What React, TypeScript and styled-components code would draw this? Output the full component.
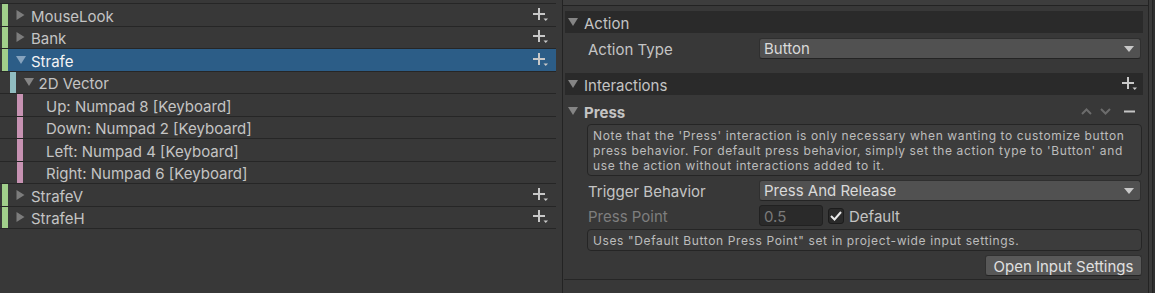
import React from "react";
import styled, { createGlobalStyle } from "styled-components";

const GlobalStyle = createGlobalStyle`
  html, body { margin: 0; padding: 0; background: #383838; }
  body { font-family: Inter, "Noto Sans", "Liberation Sans", sans-serif; color: #c4c4c4; }
  * { box-sizing: border-box; }
`;

const Page = styled.div`
  display: flex;
  width: 1155px;
  height: 293px;
  overflow: hidden;
  background: #383838;
`;

/* ---------- left tree ---------- */
const LeftPanel = styled.div`
  width: 563px;
  flex-shrink: 0;
  border-right: 1px solid #232323;
  padding-right: 6px;
  display: flex;
  flex-direction: column;
`;

const TopEdge = styled.div`
  height: 4px;
  border-bottom: 1px solid #262626;
`;

const Row = styled.div<{ $level: number }>`
  display: flex;
  height: 22.5px;
  border-bottom: 1px solid #262626;
  padding-left: ${(p) => 2 + p.$level * 7.5}px;
`;

const Bar = styled.div<{ $color: string }>`
  width: 6px;
  flex-shrink: 0;
  background: ${(p) => p.$color};
`;

const RowContent = styled.div<{ $selected?: boolean }>`
  flex: 1;
  display: flex;
  align-items: center;
  background: ${(p) => (p.$selected ? "#2c5d87" : "transparent")};
`;

const Toggle = styled.div<{ $width: number }>`
  width: ${(p) => p.$width}px;
  flex-shrink: 0;
  display: flex;
  align-items: center;
  padding-left: 8px;
  height: 100%;
`;

const RowLabel = styled.span<{ $selected?: boolean }>`
  font-size: 15px;
  padding-top: 3px;
  color: ${(p) => (p.$selected ? "#f4f4f4" : "#c4c4c4")};
  white-space: nowrap;
`;

const RowAdd = styled.div`
  margin-left: auto;
  margin-right: 7px;
  display: flex;
  align-items: center;
`;

/* ---------- right inspector ---------- */
const RightPanel = styled.div`
  flex: 1;
  display: flex;
  flex-direction: column;
  border-right: 1px solid #232323;
`;

const Gutter = styled.div`
  width: 6px;
  flex-shrink: 0;
  background: linear-gradient(to right, #3a3a3a 0 3px, #232323 3px 4px, #2f2f2f 4px);
`;

const TopStrip = styled.div`
  height: 6px;
  background: #3d3d3d;
  border-bottom: 1px solid #232323;
`;

const Body = styled.div`
  display: flex;
  flex-direction: column;
  padding: 5px 5px 0 2px;
`;

const Header = styled.div<{ $top: number }>`
  margin-top: ${(p) => p.$top}px;
  height: 22px;
  background: #2a2a2a;
  display: flex;
  align-items: center;
  padding: 0 5px 0 3px;
`;

const HeaderText = styled.span<{ $bold?: boolean }>`
  margin-left: 6px;
  padding-top: 2px;
  font-size: 15px;
  font-weight: ${(p) => (p.$bold ? 700 : 400)};
  color: #c4c4c4;
`;

const PressRow = styled.div`
  margin-top: 5px;
  height: 22px;
  display: flex;
  align-items: center;
  padding: 0 8px 0 3px;
`;

const PressTools = styled.div`
  margin-left: auto;
  display: flex;
  align-items: center;
`;

const ToolSlot = styled.span<{ $gap: number }>`
  display: flex;
  margin-left: ${(p) => p.$gap}px;
`;

const FieldRow = styled.div<{ $top: number }>`
  margin-top: ${(p) => p.$top}px;
  height: 21px;
  display: flex;
  align-items: center;
  padding-left: 23px;
  margin-right: 2px;
`;

const FieldLabel = styled.span<{ $disabled?: boolean }>`
  width: 171px;
  flex-shrink: 0;
  padding-top: 1px;
  font-size: 15px;
  color: ${(p) => (p.$disabled ? "#7e7e7e" : "#c4c4c4")};
  white-space: nowrap;
`;

const Dropdown = styled.div`
  flex: 1;
  height: 21px;
  background: #515151;
  border: 1px solid #2f2f2f;
  border-bottom-color: #242424;
  border-radius: 3px;
  display: flex;
  align-items: center;
  padding: 0 6px 0 4px;
  font-size: 15px;
  color: #dadada;
`;

const DropArrow = styled.svg`
  margin-left: auto;
`;

const NumberInput = styled.div`
  width: 64px;
  height: 21px;
  background: #2a2a2a;
  border: 1px solid #212121;
  border-radius: 3px;
  display: flex;
  align-items: center;
  padding-left: 4px;
  padding-top: 1px;
  font-size: 15px;
  color: #7a7a7a;
`;

const CheckBox = styled.div`
  margin-left: 5px;
  width: 16px;
  height: 16px;
  background: #2a2a2a;
  border: 1px solid #1c1c1c;
  border-radius: 3px;
  display: flex;
  align-items: center;
  justify-content: center;
`;

const CheckLabel = styled.span`
  margin-left: 5px;
  padding-top: 1px;
  font-size: 15px;
  color: #c4c4c4;
`;

const HelpBox = styled.div<{ $top: number; $height: number }>`
  margin: ${(p) => p.$top}px 1px 0 22px;
  height: ${(p) => p.$height}px;
  background: #3c3c3c;
  border: 1px solid #252525;
  border-radius: 4px;
  padding: 2px 5px;
  font-size: 12px;
  line-height: 15px;
  letter-spacing: 0.62px;
  color: #bcbcbc;
  white-space: nowrap;
  display: flex;
  flex-direction: column;
  justify-content: center;
`;

const ButtonRow = styled.div`
  margin-top: 4px;
  display: flex;
  justify-content: flex-end;
  margin-right: 1px;
`;

const Button = styled.div`
  width: 157px;
  height: 21px;
  background: #585858;
  border: 1px solid #303030;
  border-bottom-color: #242424;
  border-radius: 3px;
  display: flex;
  align-items: center;
  justify-content: center;
  padding-top: 1px;
  font-size: 15px;
  color: #e0e0e0;
`;

const BottomLine = styled.div`
  margin: 3px 4px 0 -1px;
  height: 1px;
  background: #262626;
`;

/* ---------- icons ---------- */
const PlusMenu = () => (
  <svg width="16" height="14" viewBox="0 0 16 14">
    <rect x="0" y="5" width="12" height="2" fill="#c8c8c8" />
    <rect x="5" y="0" width="2" height="12" fill="#c8c8c8" />
    <polygon points="10.5,10.5 15,10.5 12.75,13" fill="#c8c8c8" />
  </svg>
);

const ArrowRight = ({ color = "#7c7c7c" }: { color?: string }) => (
  <svg width="9" height="10" viewBox="0 0 9 10">
    <polygon points="0.5,0 8.5,5 0.5,10" fill={color} />
  </svg>
);

const ArrowDown = ({ color = "#858585" }: { color?: string }) => (
  <svg width="10" height="8" viewBox="0 0 10 8">
    <polygon points="0,0 10,0 5,8" fill={color} />
  </svg>
);

const Chevron = ({ up }: { up?: boolean }) => (
  <svg width="11" height="7" viewBox="0 0 11 7">
    <polyline
      points={up ? "1,6 5.5,1.5 10,6" : "1,1 5.5,5.5 10,1"}
      fill="none"
      stroke="#6c6c6c"
      strokeWidth="2"
    />
  </svg>
);

const Minus = () => (
  <svg width="11" height="3" viewBox="0 0 11 3">
    <rect x="0" y="0.5" width="11" height="2" fill="#c4c4c4" />
  </svg>
);

const Check = () => (
  <svg width="12" height="10" viewBox="0 0 12 10">
    <polyline points="1,5 4.5,8.5 11,1" fill="none" stroke="#e8e8e8" strokeWidth="2" />
  </svg>
);

/* ---------- data ---------- */
type TreeItem = {
  label: string;
  level: number;
  kind: "action" | "composite" | "part";
  expanded?: boolean;
  selected?: boolean;
};

const items: TreeItem[] = [
  { label: "MouseLook", level: 0, kind: "action" },
  { label: "Bank", level: 0, kind: "action" },
  { label: "Strafe", level: 0, kind: "action", expanded: true, selected: true },
  { label: "2D Vector", level: 1, kind: "composite", expanded: true },
  { label: "Up: Numpad 8 [Keyboard]", level: 2, kind: "part" },
  { label: "Down: Numpad 2 [Keyboard]", level: 2, kind: "part" },
  { label: "Left: Numpad 4 [Keyboard]", level: 2, kind: "part" },
  { label: "Right: Numpad 6 [Keyboard]", level: 2, kind: "part" },
  { label: "StrafeV", level: 0, kind: "action" },
  { label: "StrafeH", level: 0, kind: "action" },
];

const barColors: Record<TreeItem["kind"], string> = {
  action: "#a1cf8b",
  composite: "#90bcc0",
  part: "#c792b2",
};

const TreeRow = ({ item }: { item: TreeItem }) => (
  <Row $level={item.level}>
    <Bar $color={barColors[item.kind]} />
    <RowContent $selected={item.selected}>
      <Toggle $width={23}>
        {item.kind !== "part" &&
          (item.expanded ? (
            <ArrowDown color={item.selected ? "#86a3be" : "#858585"} />
          ) : (
            <ArrowRight />
          ))}
      </Toggle>
      <RowLabel $selected={item.selected}>{item.label}</RowLabel>
      {item.kind === "action" && (
        <RowAdd>
          <PlusMenu />
        </RowAdd>
      )}
    </RowContent>
  </Row>
);

const DropdownArrow = () => (
  <DropArrow width="10" height="6" viewBox="0 0 10 6">
    <polygon points="0,0 10,0 5,6" fill="#c8c8c8" />
  </DropArrow>
);

export default function App() {
  return (
    <Page>
      <GlobalStyle />
      <LeftPanel>
        <TopEdge />
        {items.map((it) => (
          <TreeRow key={it.label} item={it} />
        ))}
      </LeftPanel>
      <RightPanel>
        <TopStrip />
        <Body>
          <Header $top={0}>
            <ArrowDown />
            <HeaderText>Action</HeaderText>
          </Header>
          <FieldRow $top={5}>
            <FieldLabel>Action Type</FieldLabel>
            <Dropdown>
              Button
              <DropdownArrow />
            </Dropdown>
          </FieldRow>
          <Header $top={14}>
            <ArrowDown />
            <HeaderText>Interactions</HeaderText>
            <RowAdd style={{ marginRight: 0 }}>
              <PlusMenu />
            </RowAdd>
          </Header>
          <PressRow>
            <ArrowDown />
            <HeaderText $bold>Press</HeaderText>
            <PressTools>
              <Chevron up />
              <ToolSlot $gap={8}>
                <Chevron />
              </ToolSlot>
              <ToolSlot $gap={13}>
                <Minus />
              </ToolSlot>
            </PressTools>
          </PressRow>
          <HelpBox $top={2} $height={52}>
            <span>Note that the 'Press' interaction is only necessary when wanting to customize button</span>
            <span>press behavior. For default press behavior, simply set the action type to 'Button' and</span>
            <span>use the action without interactions added to it.</span>
          </HelpBox>
          <FieldRow $top={4}>
            <FieldLabel>Trigger Behavior</FieldLabel>
            <Dropdown>
              Press And Release
              <DropdownArrow />
            </Dropdown>
          </FieldRow>
          <FieldRow $top={4}>
            <FieldLabel $disabled>Press Point</FieldLabel>
            <NumberInput>0.5</NumberInput>
            <CheckBox>
              <Check />
            </CheckBox>
            <CheckLabel>Default</CheckLabel>
          </FieldRow>
          <HelpBox $top={3} $height={22}>
            <span>Uses "Default Button Press Point" set in project-wide input settings.</span>
          </HelpBox>
          <ButtonRow>
            <Button>Open Input Settings</Button>
          </ButtonRow>
          <BottomLine />
        </Body>
      </RightPanel>
      <Gutter />
    </Page>
  );
}
